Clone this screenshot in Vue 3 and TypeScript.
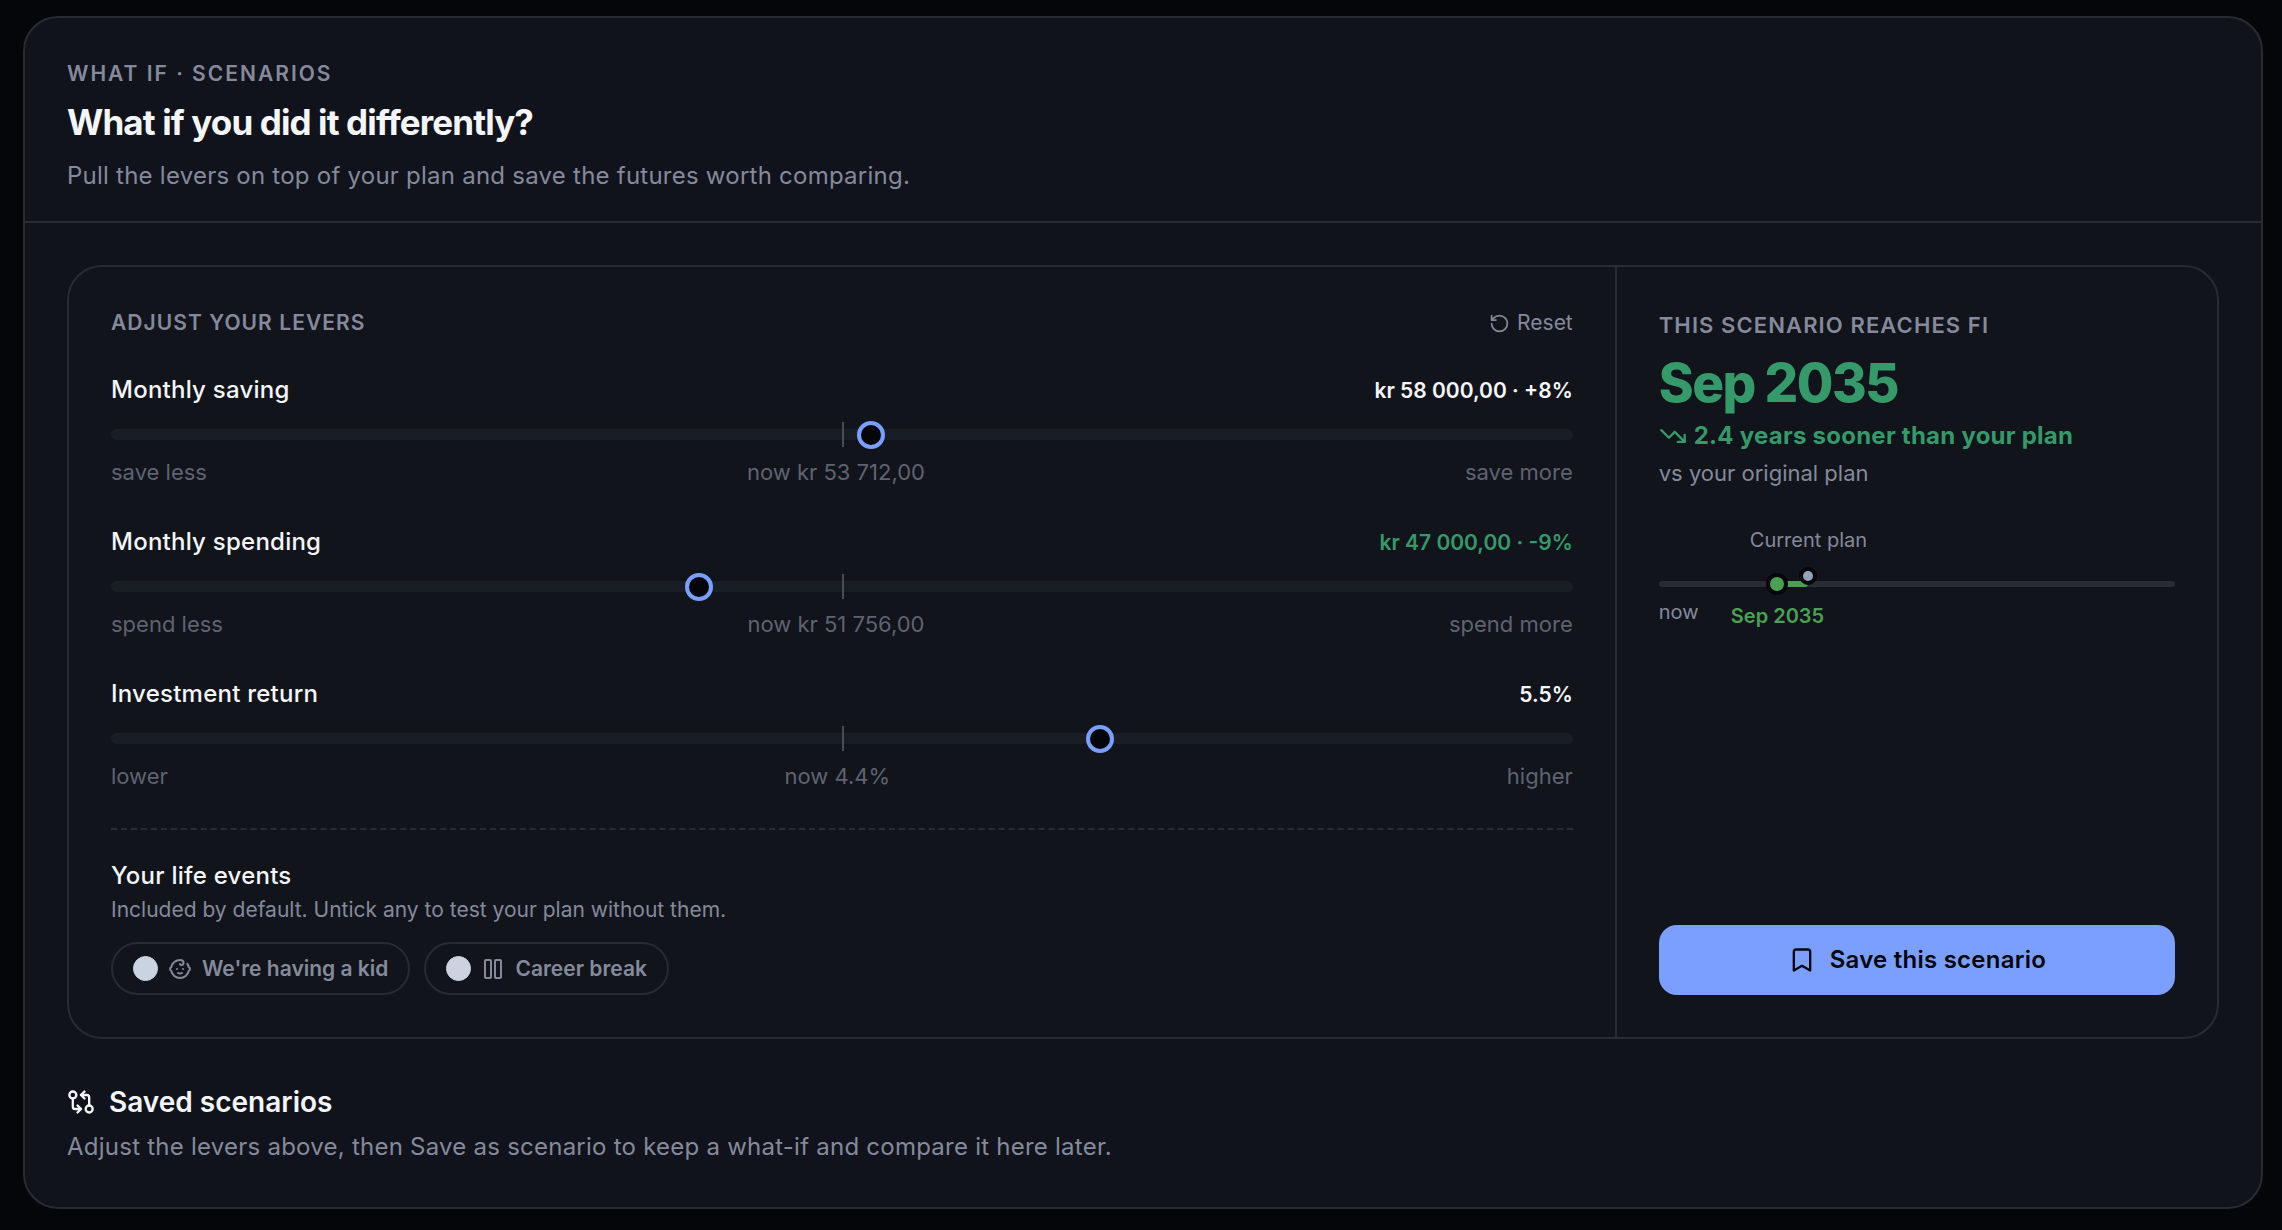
<script setup lang="ts">
import { ref } from 'vue'

interface Lever {
  id: string
  label: string
  value: string
  better: boolean
  position: number
  low: string
  now: string
  high: string
}

const levers = ref<Lever[]>([
  { id: 'saving', label: 'Monthly saving', value: 'kr 58 000,00 · +8%', better: false, position: 52, low: 'save less', now: 'now kr 53 712,00', high: 'save more' },
  { id: 'spending', label: 'Monthly spending', value: 'kr 47 000,00 · -9%', better: true, position: 40, low: 'spend less', now: 'now kr 51 756,00', high: 'spend more' },
  { id: 'return', label: 'Investment return', value: '5.5%', better: false, position: 68, low: 'lower', now: 'now 4.4%', high: 'higher' },
])

const events = ref([
  { id: 'kid', label: "We're having a kid", included: true },
  { id: 'break', label: 'Career break', included: true },
])

const scenarioAt = 23
const planAt = 29

function reset() {
  for (const lever of levers.value) lever.position = 50
}
</script>

<template>
  <main class="page">
    <section class="card">
      <header class="card-head">
        <p class="eyebrow wide">WHAT IF · SCENARIOS</p>
        <h1>What if you did it differently?</h1>
        <p class="lead">Pull the levers on top of your plan and save the futures worth comparing.</p>
      </header>

      <div class="card-body">
        <div class="panel">
          <div class="levers">
            <div class="row levers-head">
              <h2 class="eyebrow">ADJUST YOUR LEVERS</h2>
              <button type="button" class="reset" @click="reset">
                <svg class="icon small" viewBox="0 0 24 24"><path d="M3 12a9 9 0 1 0 9-9 9.75 9.75 0 0 0-6.74 2.74L3 8" /><path d="M3 3v5h5" /></svg>
                Reset
              </button>
            </div>

            <div v-for="lever in levers" :key="lever.id" class="lever">
              <div class="row lever-head">
                <label :for="lever.id">{{ lever.label }}</label>
                <output :for="lever.id" :class="{ better: lever.better }">{{ lever.value }}</output>
              </div>
              <div class="slider">
                <span class="tick"></span>
                <input :id="lever.id" v-model.number="lever.position" type="range" min="0" max="100" />
              </div>
              <div class="row scale">
                <span>{{ lever.low }}</span>
                <span>{{ lever.now }}</span>
                <span>{{ lever.high }}</span>
              </div>
            </div>

            <div class="events">
              <h3>Your life events</h3>
              <p>Included by default. Untick any to test your plan without them.</p>
              <div class="pills">
                <label v-for="event in events" :key="event.id" class="pill">
                  <input v-model="event.included" type="checkbox" />
                  <svg v-if="event.id === 'kid'" class="icon medium" viewBox="0 0 24 24"><path d="M9 12h.01" /><path d="M15 12h.01" /><path d="M10 16c.5.3 1.2.5 2 .5s1.5-.2 2-.5" /><path d="M19.38 6.813A9 9 0 0 1 20.8 10.2a2 2 0 0 1 0 3.6 9 9 0 0 1-17.6 0 2 2 0 0 1 0-3.6A9 9 0 0 1 12 3c2 0 3.5 1.1 3.5 2.5s-.9 2.5-2 2.5c-.8 0-1.5-.4-1.5-1" /></svg>
                  <svg v-else class="icon medium" viewBox="0 0 24 24"><rect x="4" y="3" width="6" height="18" rx="1" /><rect x="14" y="3" width="6" height="18" rx="1" /></svg>
                  <span>{{ event.label }}</span>
                </label>
              </div>
            </div>
          </div>

          <aside class="result">
            <h2 class="eyebrow">THIS SCENARIO REACHES FI</h2>
            <p class="date">Sep 2035</p>
            <p class="delta">
              <svg class="icon large" viewBox="0 0 24 24"><path d="M16 17h6v-6" /><path d="m22 17-8.5-8.5-5 5L2 7" /></svg>
              2.4 years sooner than your plan
            </p>
            <p class="versus">vs your original plan</p>

            <div class="timeline">
              <div class="line">
                <span class="gain" :style="{ left: scenarioAt + '%', width: planAt - scenarioAt + '%' }"></span>
                <span class="dot scenario" :style="{ left: scenarioAt + '%' }"></span>
                <span class="dot plan" :style="{ left: planAt + '%' }"></span>
                <span class="tag above" :style="{ left: planAt + '%' }">Current plan</span>
                <span class="tag below" :style="{ left: scenarioAt + '%' }">Sep 2035</span>
              </div>
              <span class="origin">now</span>
            </div>

            <button type="button" class="save">
              <svg class="icon large" viewBox="0 0 24 24"><path d="m19 21-7-4-7 4V5a2 2 0 0 1 2-2h10a2 2 0 0 1 2 2v16z" /></svg>
              Save this scenario
            </button>
          </aside>
        </div>

        <section class="saved">
          <h2>
            <svg class="icon large" viewBox="0 0 24 24"><circle cx="5" cy="6" r="3" /><path d="M12 6h5a2 2 0 0 1 2 2v7" /><path d="m15 9-3-3 3-3" /><circle cx="19" cy="18" r="3" /><path d="M12 18H7a2 2 0 0 1-2-2V9" /><path d="m9 15 3 3-3 3" /></svg>
            Saved scenarios
          </h2>
          <p class="lead">Adjust the levers above, then Save as scenario to keep a what-if and compare it here later.</p>
        </section>
      </div>
    </section>
  </main>
</template>

<style>
body {
  margin: 0;
  background: #05060a;
}
</style>

<style scoped>
.page {
  --line: #282b32;
  --muted: #858a9b;
  --faint: #5f6371;
  --text: #f5f6fa;
  --green: #35996a;
  --body-track: 0.01em;
  padding: 16px 19px 21px 23px;
  color: var(--text);
  font-family: Inter, "Liberation Sans", sans-serif;
  font-size: 24px;
  font-optical-sizing: none;
  line-height: 36px;
}

h1, h2, h3, p {
  margin: 0;
  font-size: inherit;
  font-weight: inherit;
}

button {
  border: 0;
  padding: 0;
  font: inherit;
  font-optical-sizing: none;
  cursor: pointer;
}

.card {
  border: 2px solid var(--line);
  border-radius: 35px;
  background: #10131b;
}

.card-head {
  padding: 40px 42px 27px;
  border-bottom: 2px solid var(--line);
}

.eyebrow {
  color: var(--muted);
  font-size: 21px;
  line-height: 32px;
  font-weight: 600;
  letter-spacing: 0.05em;
}

.eyebrow.wide {
  letter-spacing: 2px;
}

h1 {
  margin: 10px 0 14px;
  font-size: 35px;
  line-height: 44px;
  font-weight: 700;
  letter-spacing: -0.025em;
}

.lead {
  color: var(--muted);
  letter-spacing: var(--body-track);
}

.card-body {
  padding: 42px;
}

.panel {
  display: grid;
  grid-template-columns: 77fr 30fr;
  border: 2px solid var(--line);
  border-radius: 35px;
  background: #11141b;
}

.levers {
  padding: 40px 42px 42px;
}

.row {
  display: flex;
  justify-content: space-between;
  align-items: center;
}

.levers-head {
  margin-bottom: 33px;
}

.icon {
  flex: none;
  fill: none;
  stroke: currentColor;
  stroke-width: 2;
  stroke-linecap: round;
  stroke-linejoin: round;
}

.small {
  width: 21px;
  height: 21px;
}

.medium {
  width: 24px;
  height: 24px;
}

.large {
  width: 28px;
  height: 28px;
}

.reset {
  display: flex;
  align-items: center;
  gap: 7px;
  background: none;
  color: var(--muted);
  font-size: 21px;
  line-height: 32px;
}

.lever {
  margin-bottom: 36px;
}

.lever-head {
  align-items: baseline;
}

.lever-head label {
  font-weight: 500;
  letter-spacing: var(--body-track);
}

.lever-head output {
  font-size: 21px;
  line-height: 32px;
  font-weight: 600;
}

.better {
  color: var(--green);
}

.slider {
  display: flex;
  position: relative;
  height: 28px;
  margin: 12px 0 8px;
}

.slider input {
  width: 100%;
  height: 28px;
  margin: 0;
  appearance: none;
  background: none;
  position: relative;
}

.slider input::-webkit-slider-runnable-track {
  height: 11px;
  border-radius: 6px;
  background: rgba(100, 120, 140, 0.1);
}

.slider input::-webkit-slider-thumb {
  appearance: none;
  box-sizing: border-box;
  width: 28px;
  height: 28px;
  margin-top: -8px;
  border: 4px solid #7a9fff;
  border-radius: 50%;
  background: #05060a;
}

.tick {
  position: absolute;
  left: 50%;
  top: 2px;
  width: 2px;
  height: 25px;
  background: #484b52;
}

.scale {
  color: var(--faint);
  font-size: 22px;
  line-height: 32px;
}

.events {
  margin-top: 36px;
  padding-top: 28px;
  border-top: 2px dashed var(--line);
}

.events h3 {
  font-weight: 500;
  letter-spacing: var(--body-track);
}

.events p {
  color: var(--muted);
  font-size: 21px;
  line-height: 32px;
}

.pills {
  display: flex;
  gap: 14px;
  margin-top: 16px;
}

.pill {
  display: flex;
  align-items: center;
  gap: 10px;
  padding: 8px 20px;
  border: 2px solid var(--line);
  border-radius: 28px;
  color: var(--muted);
  font-size: 21px;
  line-height: 33px;
  font-weight: 600;
}

.pill input {
  appearance: none;
  width: 25px;
  height: 25px;
  margin: 0;
  border: 1px solid #cbd3e1;
  border-radius: 50%;
}

.pill input:checked {
  background: #cbd3e1;
}

.result {
  display: flex;
  flex-direction: column;
  padding: 42px;
  border-left: 2px solid var(--line);
}

.result .eyebrow {
  font-size: 22px;
}

.date {
  margin-top: 14px;
  color: var(--green);
  font-size: 53px;
  line-height: 56px;
  font-weight: 800;
  letter-spacing: -0.03em;
}

.delta {
  display: flex;
  align-items: center;
  gap: 7px;
  margin-top: 7px;
  color: var(--green);
  font-weight: 700;
  letter-spacing: var(--body-track);
}

.versus {
  margin-top: 3px;
  color: var(--muted);
  font-size: 22px;
  line-height: 32px;
}

.timeline {
  margin-top: 92px;
  color: var(--muted);
  font-size: 20px;
  line-height: 28px;
}

.line {
  position: relative;
  height: 6px;
  border-radius: 3px;
  background: var(--line);
}

.gain {
  position: absolute;
  top: 0;
  height: 6px;
  border-radius: 3px;
  background: #4ba153;
}

.dot {
  position: absolute;
  top: 50%;
  box-sizing: border-box;
  border: 4px solid #05060a;
  border-radius: 50%;
  transform: translate(-50%, -50%);
}

.scenario {
  width: 22px;
  height: 22px;
  background: #4ba153;
}

.plan {
  top: -5px;
  width: 18px;
  height: 18px;
  background: #94a3b8;
}

.tag {
  position: absolute;
  transform: translateX(-50%);
  white-space: nowrap;
}

.above {
  bottom: 33px;
}

.below {
  top: 21px;
  color: #4ba153;
  font-weight: 600;
}

.origin {
  display: block;
  margin-top: 11px;
}

.save {
  display: flex;
  justify-content: center;
  align-items: center;
  gap: 14px;
  height: 70px;
  margin-top: auto;
  border-radius: 18px;
  background: #7a9fff;
  color: #05060a;
  font-weight: 600;
  letter-spacing: var(--body-track);
}

.saved {
  margin-top: 42px;
}

.saved h2 {
  display: flex;
  align-items: center;
  gap: 14px;
  margin-bottom: 6px;
  font-size: 28px;
  line-height: 42px;
  font-weight: 600;
}
</style>
